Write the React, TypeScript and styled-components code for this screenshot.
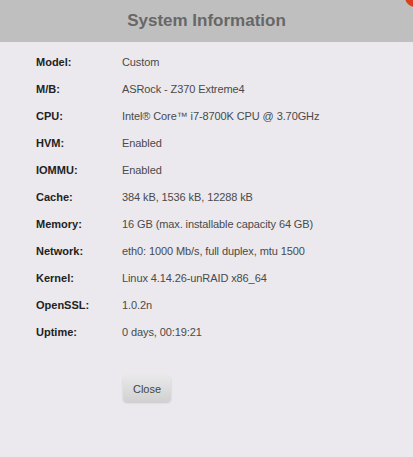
import { Fragment } from 'react'
import styled, { createGlobalStyle } from 'styled-components'

const GlobalStyle = createGlobalStyle`
  html, body {
    margin: 0;
    padding: 0;
    background: #ebe9ed;
  }
  body {
    font-family: "Liberation Sans", Arial, sans-serif;
  }
`

const Dialog = styled.div`
  width: 413px;
  height: 457px;
  background: #ebe9ed;
  position: relative;
  overflow: hidden;
`

const TitleBar = styled.div`
  height: 41px;
  padding-bottom: 1px;
  background: #bfbfbf;
  display: flex;
  align-items: center;
  justify-content: center;
  color: #676767;
  font-size: 17px;
  font-weight: bold;
`

const CloseDot = styled.div`
  position: absolute;
  top: -13px;
  right: -12px;
  width: 20px;
  height: 20px;
  border-radius: 50%;
  background: #d9411e;
`

const InfoGrid = styled.div`
  display: grid;
  grid-template-columns: 86px 1fr;
  grid-auto-rows: 27px;
  align-items: center;
  padding: 6px 0 0 36px;
  font-size: 11px;
`

const Label = styled.div`
  font-weight: bold;
  color: #222;
`

const Value = styled.div`
  color: #4a4a4a;
  letter-spacing: -0.1px;
`

const Footer = styled.div`
  padding: 30px 0 0 123px;
`

const Button = styled.button`
  width: 48px;
  height: 27px;
  border: none;
  border-radius: 4px;
  background: linear-gradient(#e9e9e9, #d1d1d1);
  box-shadow: 0 1px 2px rgba(0, 0, 0, 0.15);
  color: #444;
  font-family: "Liberation Sans", Arial, sans-serif;
  font-size: 11px;
  padding: 0;
`

const rows: [string, string][] = [
  ['Model:', 'Custom'],
  ['M/B:', 'ASRock - Z370 Extreme4'],
  ['CPU:', 'Intel® Core™ i7-8700K CPU @ 3.70GHz'],
  ['HVM:', 'Enabled'],
  ['IOMMU:', 'Enabled'],
  ['Cache:', '384 kB, 1536 kB, 12288 kB'],
  ['Memory:', '16 GB (max. installable capacity 64 GB)'],
  ['Network:', 'eth0: 1000 Mb/s, full duplex, mtu 1500'],
  ['Kernel:', 'Linux 4.14.26-unRAID x86_64'],
  ['OpenSSL:', '1.0.2n'],
  ['Uptime:', '0 days, 00:19:21'],
]

export default function App() {
  return (
    <>
      <GlobalStyle />
      <Dialog>
        <TitleBar>System Information</TitleBar>
        <CloseDot />
        <InfoGrid>
          {rows.map(([k, v]) => (
            <Fragment key={k}>
              <Label>{k}</Label>
              <Value>{v}</Value>
            </Fragment>
          ))}
        </InfoGrid>
        <Footer>
          <Button>Close</Button>
        </Footer>
      </Dialog>
    </>
  )
}
